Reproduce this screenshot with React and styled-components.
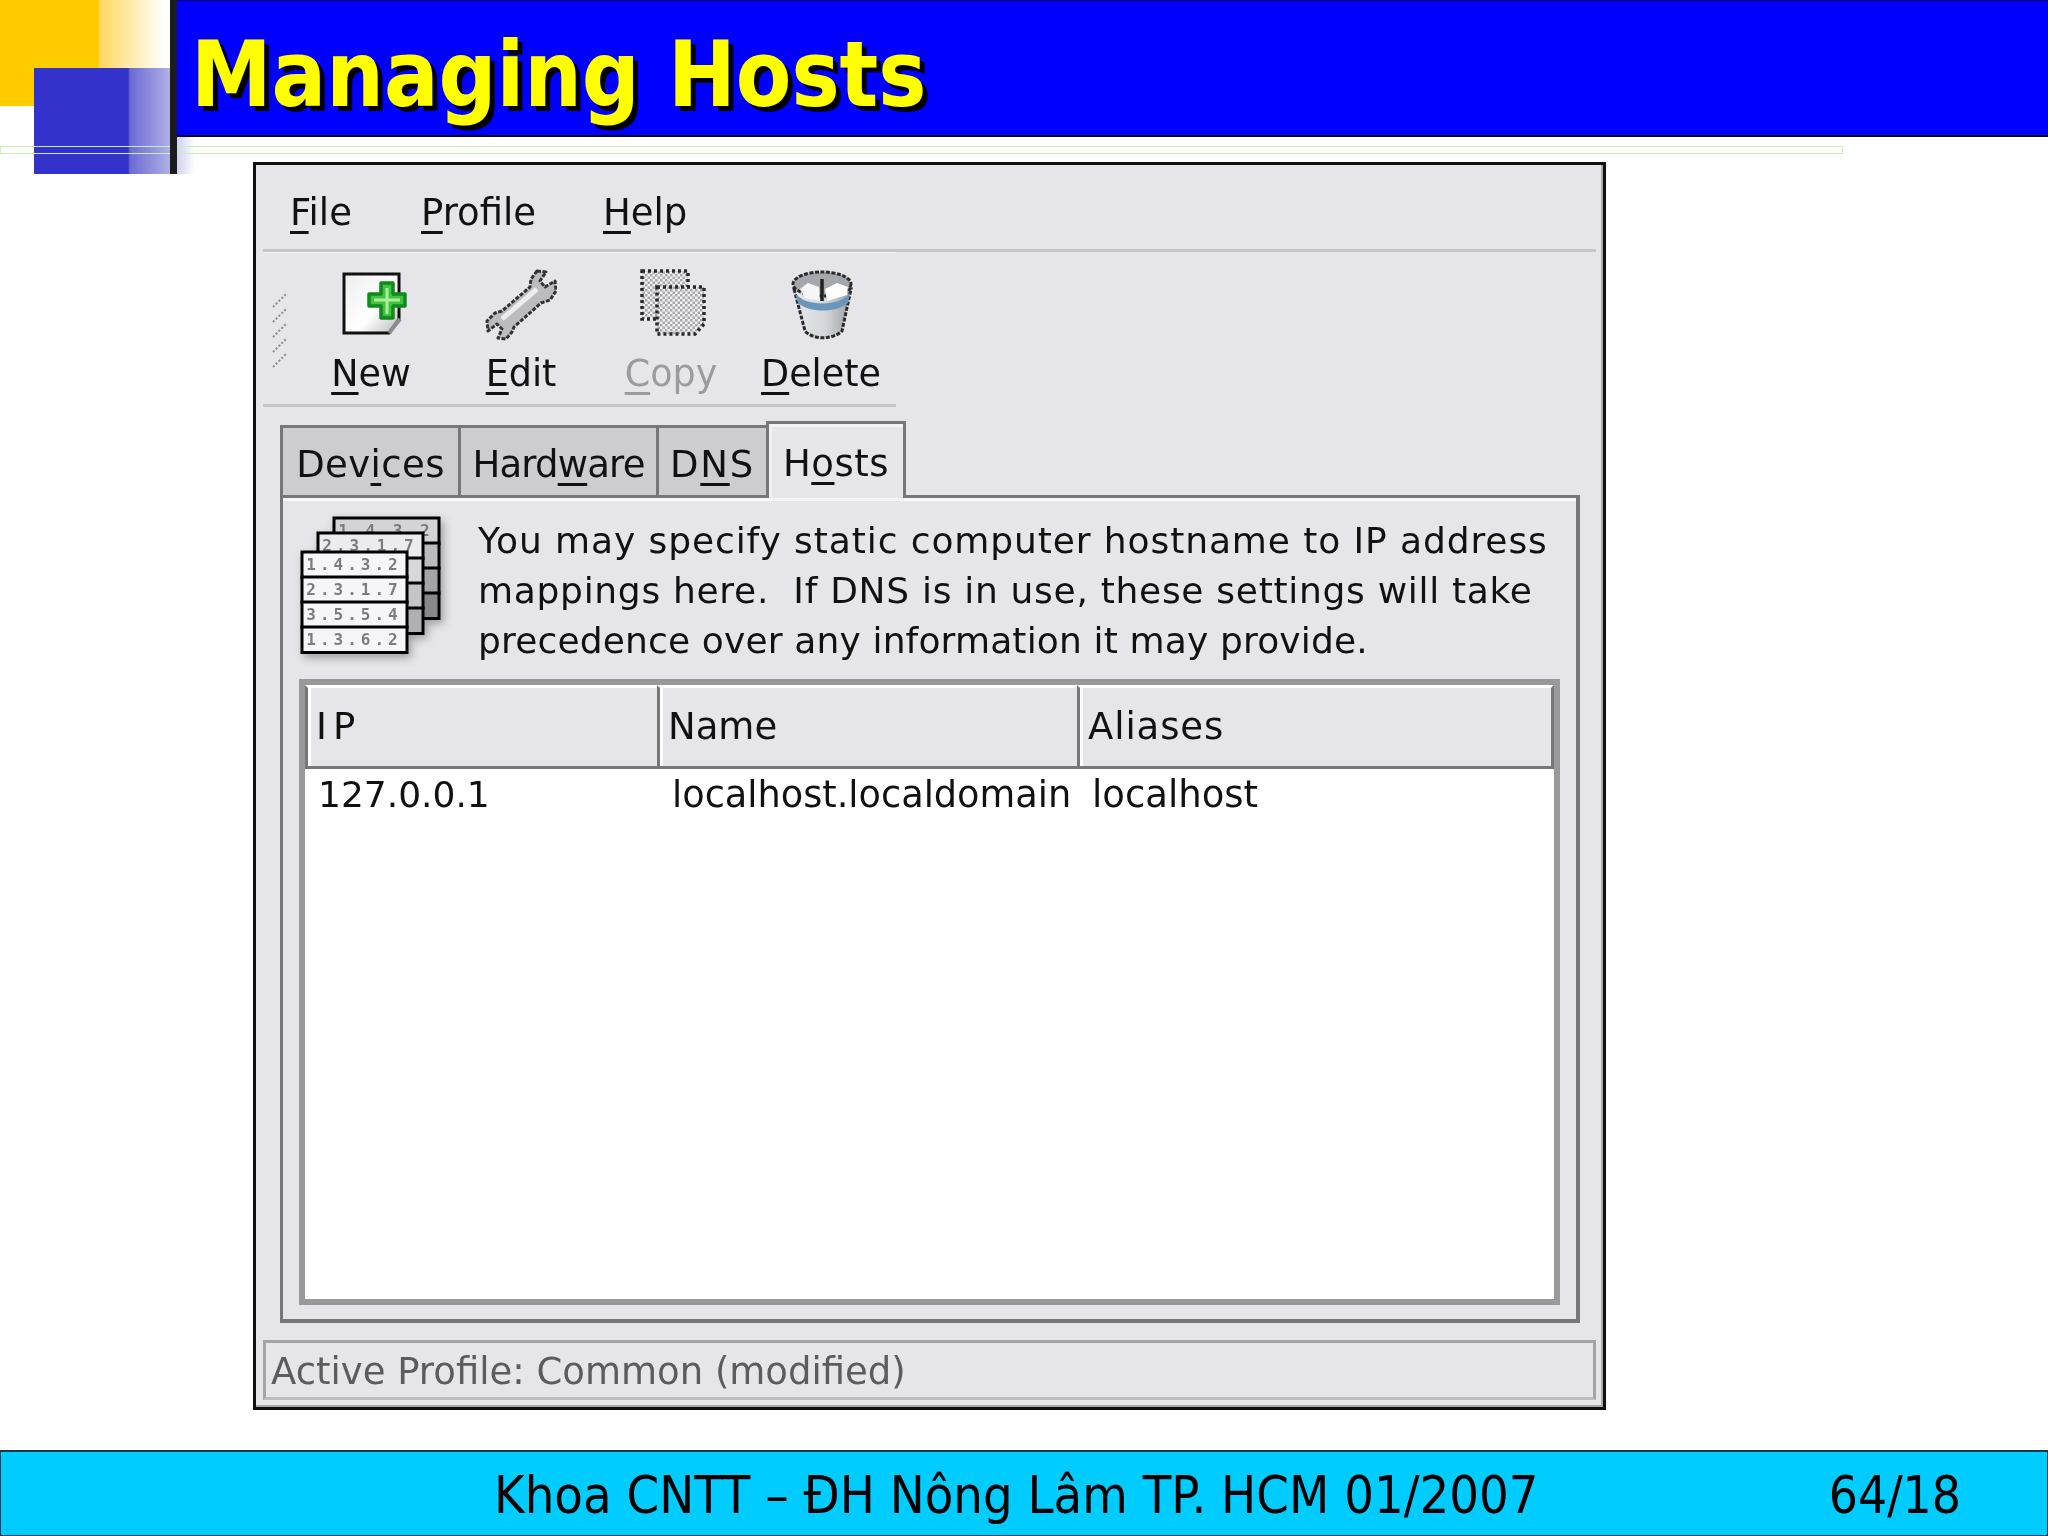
import React from 'react';
import styled, { createGlobalStyle } from 'styled-components';

const Global = createGlobalStyle`
  html, body { margin: 0; padding: 0; background: #fff; }
  * { box-sizing: border-box; }
`;

const gtk = `'DejaVu Sans', 'Liberation Sans', sans-serif`;
const tahoma = `'DejaVu Sans Condensed', 'DejaVu Sans', sans-serif`;

const Slide = styled.div`
  position: relative;
  width: 2048px;
  height: 1536px;
  overflow: hidden;
  background: #fff;
  display: flex;
  flex-direction: column;
`;

const YellowSquare = styled.div`
  position: absolute;
  left: 0;
  top: 0;
  width: 170px;
  height: 106px;
  background: linear-gradient(90deg, #ffcc00 0, #ffcc00 98px, #ffd860 100px, #fff 165px);
`;

const BlueSquare = styled.div`
  position: absolute;
  left: 34px;
  top: 68px;
  width: 161px;
  height: 106px;
  background: linear-gradient(90deg, #3333cc 0, #3333cc 94px, #6b6bd4 96px, #b0b0e6 136px, #d0d0f0 143px, #fff 161px);
`;

const DarkBar = styled.div`
  position: absolute;
  left: 170px;
  top: 0;
  width: 7px;
  height: 174px;
  background: #1c1c1c;
`;

const GreenFrame = styled.div`
  position: absolute;
  left: 0;
  top: 146px;
  width: 1843px;
  height: 8px;
  border: 1px solid #c6f0b4;
`;

const TitleBar = styled.header`
  position: relative;
  margin-left: 177px;
  height: 137px;
  flex: none;
  background: #0000ff;
  border-top: 1px solid #000066;
  border-bottom: 2px solid #000033;
  padding-left: 14px;
`;

const Title = styled.h1`
  margin: 0;
  font-family: ${tahoma};
  font-weight: 700;
  font-size: 90px;
  line-height: 148px;
  color: #ffff00;
  text-shadow: 5px 5px 0 #000;
  white-space: nowrap;
  filter: blur(0.4px);
`;

const Window = styled.section`
  flex: none;
  margin: 25px 0 0 253px;
  width: 1353px;
  height: 1248px;
  border: 3px solid #111;
  background: #e6e6ea;
  box-shadow: inset -2px -2px 0 #a8a8aa;
  display: flex;
  flex-direction: column;
  font-family: ${gtk};
  color: #111;
  filter: blur(0.7px);
`;

const MenuBar = styled.nav`
  height: 87px;
  margin: 0 7px;
  padding: 0 0 0 27px;
  border-bottom: 3px solid #c6c6c8;
  display: flex;
  font-size: 37px;
  line-height: 95px;
`;

const MenuItem = styled.span`
  width: ${(p) => p.$w}px;
`;

const Key = styled.span`
  text-decoration: underline;
  text-decoration-thickness: 3px;
  text-underline-offset: 6px;
`;

const Toolbar = styled.div`
  position: relative;
  width: 633px;
  height: 155px;
  margin-left: 7px;
  border-bottom: 3px solid #c6c6c8;
  box-shadow: inset 0 1px 0 #f4f4f6;
  display: flex;
  padding-left: 33px;
`;

const Grip = styled.svg`
  width: 16px;
  height: 78px;
  position: absolute;
  left: 9px;
  top: 41px;
`;

const ToolButton = styled.div`
  flex: none;
  width: 150px;
  display: flex;
  flex-direction: column;
  align-items: center;
  padding-top: 17px;
  font-size: 36.5px;
  color: ${(p) => (p.$off ? '#9c9c9e' : '#111')};
`;

const ToolIcon = styled.svg`
  width: 72px;
  height: 72px;
  display: block;
  flex: none;
`;

const ToolLabel = styled.span`
  line-height: 48px;
  margin-top: 9px;
  white-space: nowrap;
`;

const Notebook = styled.div`
  flex: none;
  margin: 14px 23px 0 24px;
  height: 902px;
  display: flex;
  flex-direction: column;
`;

const TabRow = styled.div`
  height: 77px;
  flex: none;
  display: flex;
  align-items: flex-end;
  margin-bottom: -3px;
  position: relative;
  z-index: 1;
`;

const Tab = styled.div`
  flex: none;
  width: ${(p) => p.$w}px;
  height: ${(p) => (p.$active ? 77 : 73)}px;
  margin-left: ${(p) => (p.$active ? -3 : 0)}px;
  border: 3px solid #77777a;
  border-left-width: ${(p) => (p.$active || p.$first ? 3 : 0)}px;
  border-bottom: ${(p) => (p.$active ? 'none' : '3px solid #77777a')};
  background: ${(p) => (p.$active ? '#e6e6ea' : '#cdcdd0')};
  box-shadow: ${(p) => (p.$active ? 'inset 3px 3px 0 #f2f2f4' : 'none')};
  font-size: 37px;
  letter-spacing: ${(p) => p.$ls}px;
  line-height: ${(p) => (p.$active ? 80 : 74)}px;
  text-align: center;
  white-space: nowrap;
`;

const Panel = styled.div`
  flex: 1;
  min-height: 0;
  border: 3px solid #77777a;
  border-bottom-width: 4px;
  border-right-width: 4px;
  box-shadow: inset 0 3px 0 #f6f6f8;
  padding: 0 16px 14px 16px;
  display: flex;
  flex-direction: column;
`;

const Intro = styled.div`
  height: 181px;
  flex: none;
  display: flex;
  align-items: flex-start;
`;

const HostsIcon = styled.svg`
  width: 150px;
  height: 150px;
  flex: none;
  margin-top: 17px;
  filter: drop-shadow(3px 4px 4px rgba(0, 0, 0, 0.3));
`;

const IntroText = styled.div`
  margin: 18px 0 0 29px;
  font-size: 36px;
`;

const IntroLine = styled.div`
  line-height: 50px;
  white-space: pre;
  letter-spacing: ${(p) => p.$ls}px;
`;

const Table = styled.div`
  flex: 1;
  min-height: 0;
  border: 6px solid #99999b;
  background: #fff;
  display: flex;
  flex-direction: column;
`;

const Columns = styled.div`
  display: grid;
  grid-template-columns: 352px 420px 1fr;
  height: ${(p) => p.$h}px;
  flex: none;
`;

const HeadCell = styled.div`
  border-left: 3px solid #77777a;
  border-right: ${(p) => (p.$last ? '3px solid #77777a' : 'none')};
  border-bottom: 3px solid #77777a;
  border-top: 3px solid #fff;
  background: #e6e6ea;
  box-shadow: inset 3px 0 0 #fff;
  padding-left: 8px;
  font-size: 37px;
  letter-spacing: ${(p) => p.$ls || 0}px;
  line-height: 78px;
`;

const Cell = styled.div`
  padding-left: ${(p) => p.$pad}px;
  font-size: ${(p) => p.$size}px;
  line-height: 60px;
  white-space: nowrap;
`;

const StatusBar = styled.footer`
  height: 60px;
  flex: none;
  margin: 17px 7px 0;
  border: 3px solid #a4a4a6;
  border-bottom-color: #bcbcbe;
  padding-left: 5px;
  font-size: 37px;
  line-height: 58px;
  color: #5c5c5e;
`;

const Footer = styled.footer`
  flex: none;
  margin-top: 40px;
  height: 86px;
  background: #00ccff;
  border: 1px solid #0a3a4a;
  border-top-width: 2px;
  display: flex;
  align-items: center;
  padding-top: 3px;
  font-family: ${tahoma};
  font-size: 52px;
  color: #000;
  white-space: nowrap;
`;

const FooterText = styled.span`
  margin-left: 493px;
  filter: blur(0.4px);
`;

const PageNo = styled.span`
  margin-left: auto;
  margin-right: 86px;
  font-size: 51px;
  filter: blur(0.4px);
`;

const NewIcon = () => (
  <ToolIcon viewBox="0 0 72 72">
    <defs>
      <linearGradient id="pg" x1="0" y1="0" x2="1" y2="1">
        <stop offset="0" stopColor="#eeeef0" />
        <stop offset="0.6" stopColor="#fff" />
        <stop offset="1" stopColor="#b8b8ba" />
      </linearGradient>
    </defs>
    <path d="M9 5H64V50L54 64H9Z" fill="url(#pg)" stroke="#111" strokeWidth="3" />
    <path d="M54 64L65 50" stroke="#8c8c8e" strokeWidth="4" fill="none" />
    <path
      d="M46 14h12v11h12v12H58v12H46V37H34V25h12z"
      fill="#42c23c"
      stroke="#0f8a1c"
      strokeWidth="3.5"
      strokeLinejoin="round"
    />
    <path d="M52 19v26M39 31h26" stroke="#a8ec9c" strokeWidth="3" />
  </ToolIcon>
);

const EditIcon = () => (
  <ToolIcon viewBox="0 0 72 72">
    <path
      d="M52 2L61 3L55 12L60 18L70 12L71 22L65 31L56 34L29 58L27 63L21 70L13 69L17 60L12 55L3 62L2 52L10 44L17 42L45 18L46 10Z"
      fill="#bcbcbe"
      stroke="#333"
      strokeWidth="3"
      strokeDasharray="4 1.5"
      strokeLinejoin="round"
    />
    <path d="M17 50L52 20" stroke="#ececee" strokeWidth="5" />
  </ToolIcon>
);

const CopyIcon = () => (
  <ToolIcon viewBox="0 0 72 72">
    <defs>
      <pattern id="dots" width="5" height="5" patternUnits="userSpaceOnUse">
        <rect width="5" height="5" fill="#f2f2f4" />
        <rect width="2.5" height="2.5" fill="#a8a8aa" />
        <rect x="2.5" y="2.5" width="2.5" height="2.5" fill="#a8a8aa" />
      </pattern>
    </defs>
    <path d="M7 2H53V50H7Z" fill="url(#dots)" stroke="#2a2a2a" strokeWidth="3.5" strokeDasharray="3 3" />
    <path d="M22 18H69V55L60 65H22Z" fill="url(#dots)" stroke="#2a2a2a" strokeWidth="3.5" strokeDasharray="3 3" />
  </ToolIcon>
);

const TrashIcon = () => (
  <ToolIcon viewBox="0 0 72 72">
    <defs>
      <linearGradient id="can" x1="0" y1="0" x2="1" y2="0">
        <stop offset="0" stopColor="#e8e8ea" />
        <stop offset="0.55" stopColor="#d2d6da" />
        <stop offset="1" stopColor="#9ca0a4" />
      </linearGradient>
    </defs>
    <path d="M9 20L20 62C28 71 48 71 57 62L66 20Z" fill="url(#can)" stroke="#2c2c2c" strokeWidth="3" strokeDasharray="4 1.5" />
    <path d="M10 24C20 38 55 38 65 24L63 34C52 44 24 44 13 34Z" fill="#6a96ba" />
    <ellipse cx="37" cy="15" rx="29" ry="12" fill="#a4a8ac" stroke="#2c2c2c" strokeWidth="3" strokeDasharray="4 1.5" />
    <path d="M15 20L23 14L34 18L35 32L20 29Z" fill="#f6f6f8" />
    <path d="M40 20L52 14L63 18L62 26L42 32Z" fill="#fff" />
    <path d="M37 10V32" stroke="#222" strokeWidth="3.5" />
  </ToolIcon>
);

const hostRows = ['1.4.3.2', '2.3.1.7', '3.5.5.4', '1.3.6.2'];

const StackRow = ({ x, y, fill, label }) => (
  <g>
    <rect x={x} y={y} width="105" height="25.5" fill={fill} stroke="#000" strokeWidth="3" />
    {label && (
      <text
        x={x + 52}
        y={y + 18}
        textAnchor="middle"
        fontFamily="'DejaVu Sans Mono', monospace"
        fontSize="16"
        fontWeight="700"
        letterSpacing="4"
        fill="#7c7c7e"
      >
        {label}
      </text>
    )}
  </g>
);

export default function App() {
  return (
    <Slide>
      <Global />
      <YellowSquare />
      <BlueSquare />
      <GreenFrame />
      <DarkBar />
      <TitleBar>
        <Title>Managing Hosts</Title>
      </TitleBar>
      <Window>
        <MenuBar>
          <MenuItem $w={131}><Key>F</Key>ile</MenuItem>
          <MenuItem $w={182}><Key>P</Key>rofile</MenuItem>
          <MenuItem $w={100}><Key>H</Key>elp</MenuItem>
        </MenuBar>
        <Toolbar>
          <Grip viewBox="0 0 16 78">
            {[0, 15, 30, 45, 60].map((y) => (
              <path key={y} d={`M1 ${y + 14}L14 ${y + 1}`} stroke="#8a8a8c" strokeWidth="2" strokeDasharray="2 2" />
            ))}
          </Grip>
          <ToolButton><NewIcon /><ToolLabel><Key>N</Key>ew</ToolLabel></ToolButton>
          <ToolButton><EditIcon /><ToolLabel><Key>E</Key>dit</ToolLabel></ToolButton>
          <ToolButton $off><CopyIcon /><ToolLabel><Key>C</Key>opy</ToolLabel></ToolButton>
          <ToolButton><TrashIcon /><ToolLabel><Key>D</Key>elete</ToolLabel></ToolButton>
        </Toolbar>
        <Notebook>
          <TabRow>
            <Tab $w={181} $first $ls={0.4}>Dev<Key>i</Key>ces</Tab>
            <Tab $w={198} $ls={-0.8}>Hard<Key>w</Key>are</Tab>
            <Tab $w={110} $ls={1.7}>D<Key>N</Key>S</Tab>
            <Tab $w={140} $active $ls={0.5}>H<Key>o</Key>sts</Tab>
          </TabRow>
          <Panel>
            <Intro>
              <HostsIcon viewBox="0 0 150 150">
                {['#d4d4d6', '#bcbcbe', '#a4a4a6', '#88888a'].map((fill, i) => (
                  <StackRow key={fill} x={35} y={3 + i * 25} fill={fill} label={i === 0 ? hostRows[0] : undefined} />
                ))}
                {['#ececee', '#d8d8da', '#c4c4c6', '#b0b0b2'].map((fill, i) => (
                  <StackRow key={fill} x={19} y={18 + i * 25} fill={fill} label={i === 0 ? hostRows[1] : undefined} />
                ))}
                {hostRows.map((label, i) => (
                  <StackRow key={label} x={3} y={37 + i * 25} fill="#f6f6f8" label={label} />
                ))}
              </HostsIcon>
              <IntroText>
                <IntroLine $ls={0.9}>You may specify static computer hostname to IP address</IntroLine>
                <IntroLine $ls={0.7}>mappings here.  If DNS is in use, these settings will take</IntroLine>
                <IntroLine $ls={0.15}>precedence over any information it may provide.</IntroLine>
              </IntroText>
            </Intro>
            <Table>
              <Columns $h={80}>
                <HeadCell $ls={6}>IP</HeadCell>
                <HeadCell>Name</HeadCell>
                <HeadCell $last $ls={0.9}>Aliases</HeadCell>
              </Columns>
              <Columns $h={60}>
                <Cell $pad={13} $size={36}>127.0.0.1</Cell>
                <Cell $pad={15} $size={36.7}>localhost.localdomain</Cell>
                <Cell $pad={15} $size={37}>localhost</Cell>
              </Columns>
            </Table>
          </Panel>
        </Notebook>
        <StatusBar>Active Profile: Common (modified)</StatusBar>
      </Window>
      <Footer>
        <FooterText>Khoa CNTT – ĐH Nông Lâm TP. HCM 01/2007</FooterText>
        <PageNo>64/18</PageNo>
      </Footer>
    </Slide>
  );
}
